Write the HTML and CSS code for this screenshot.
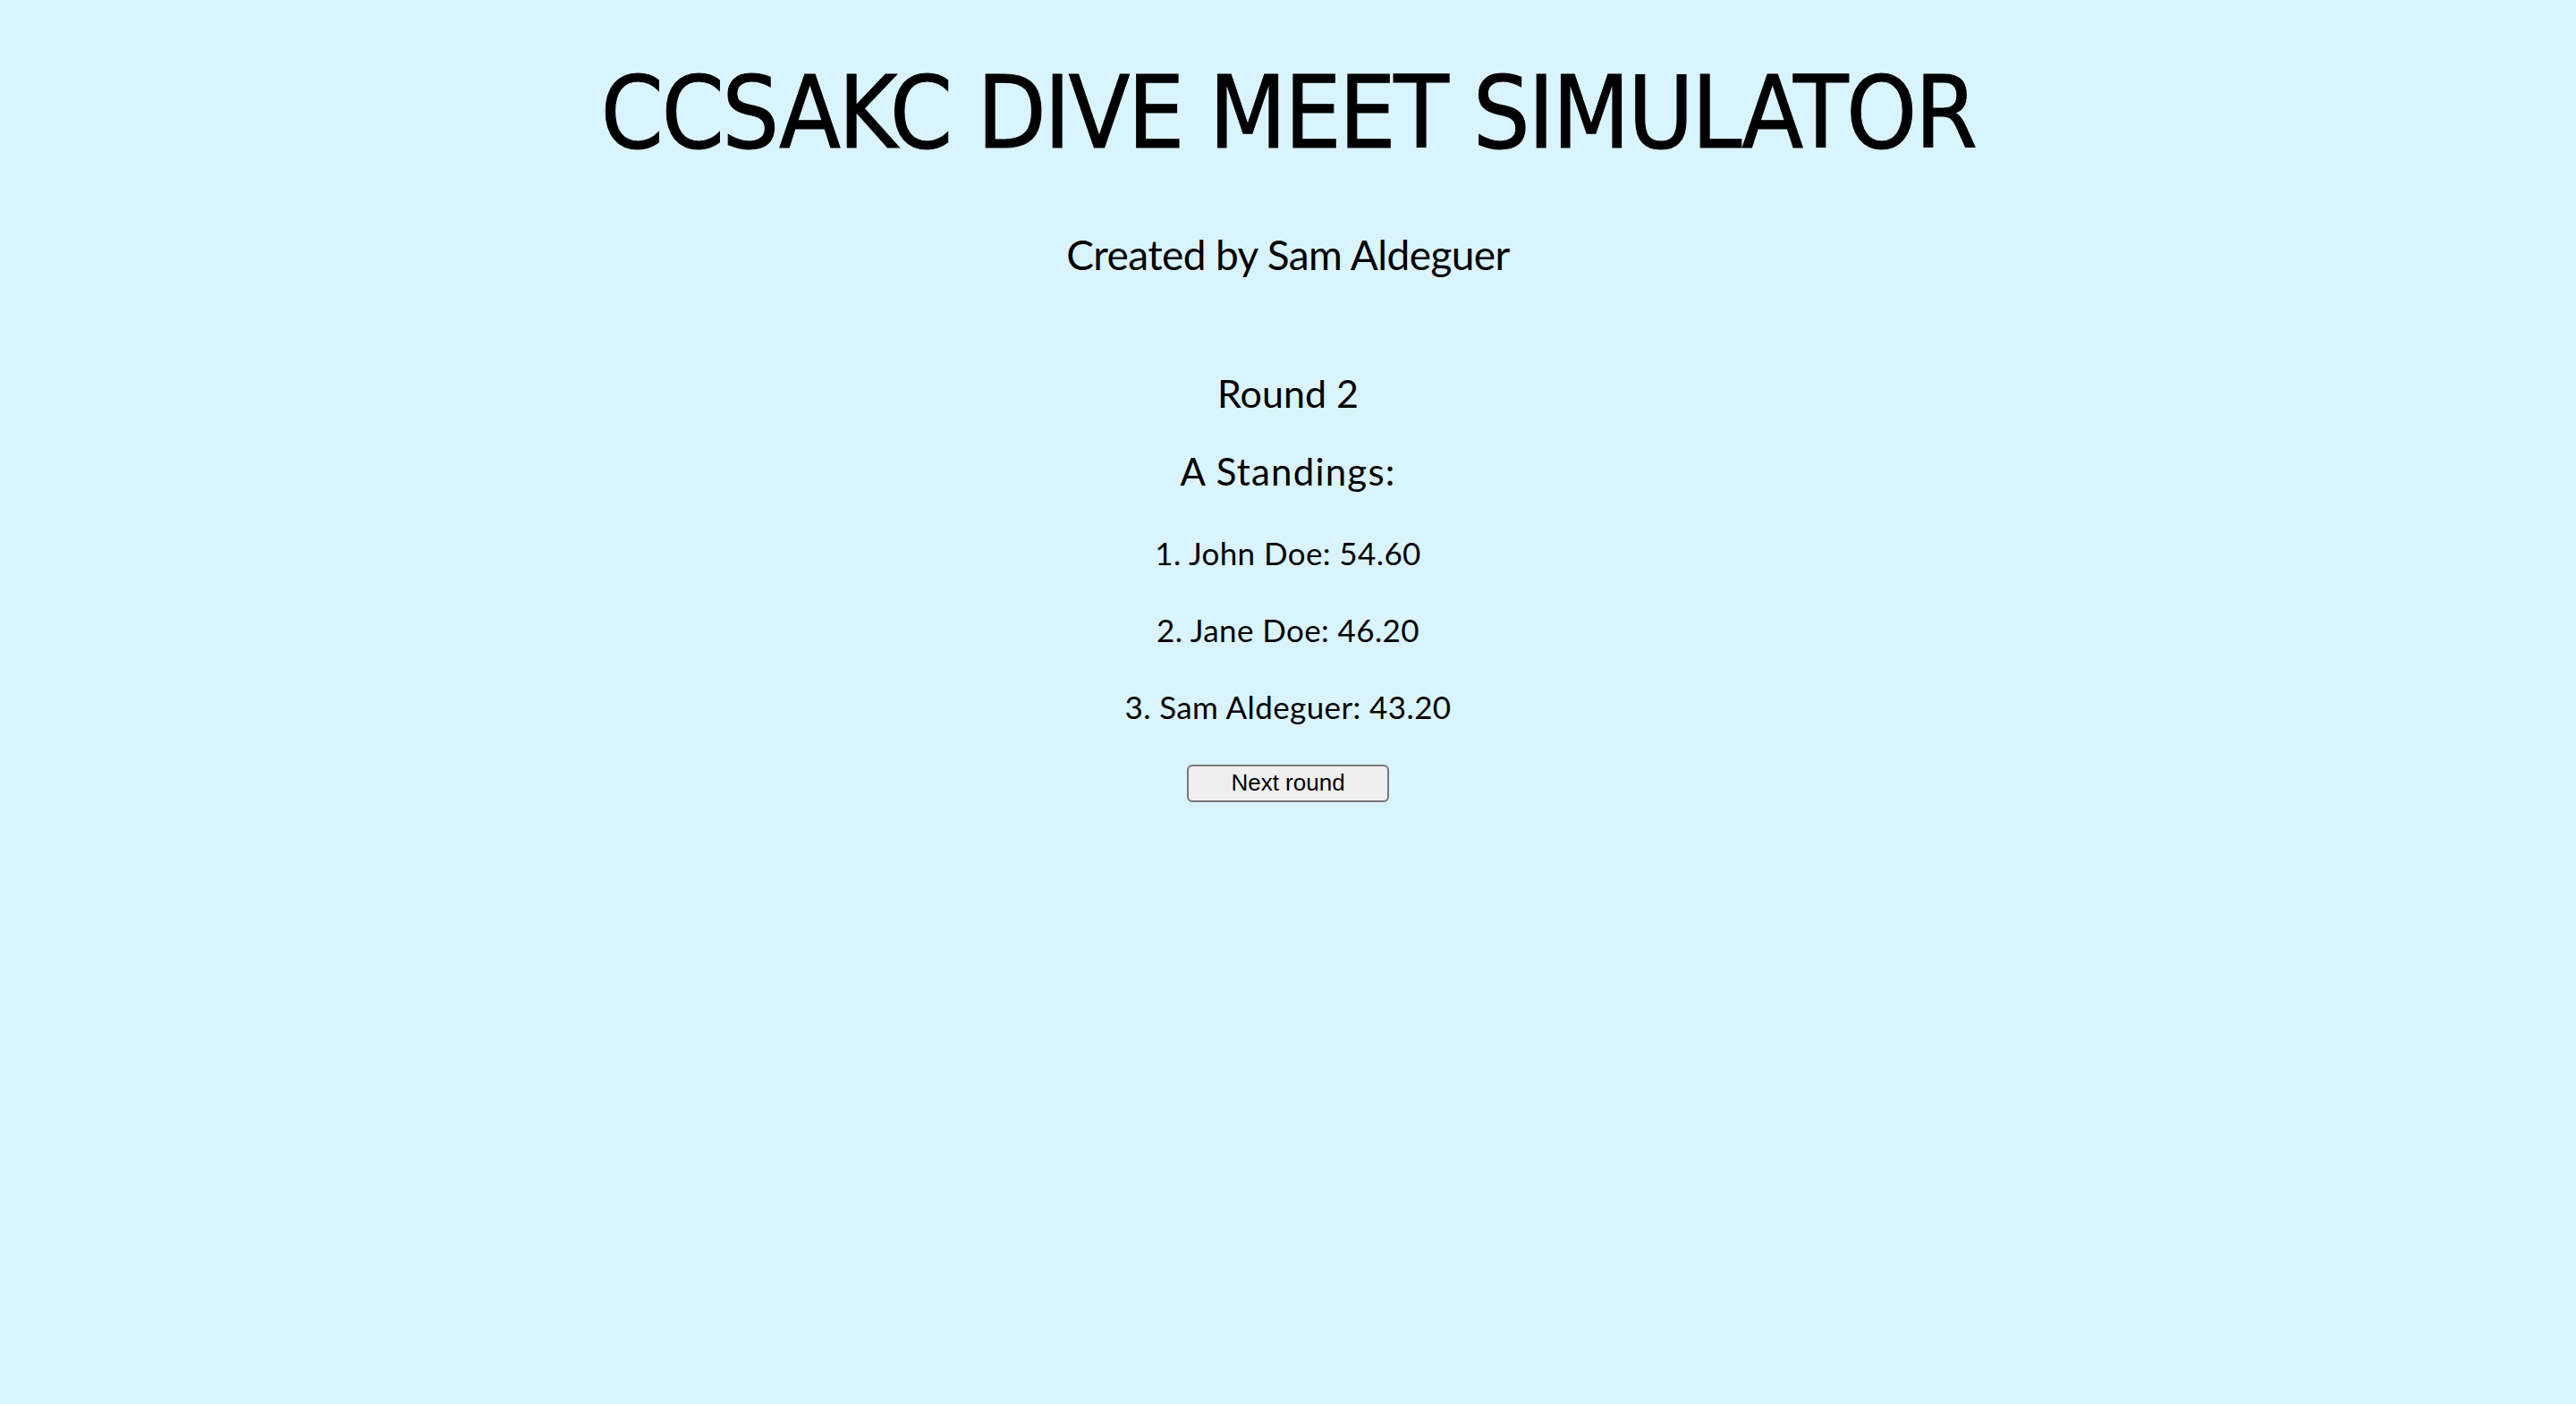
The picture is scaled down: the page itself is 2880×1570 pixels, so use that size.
FILE: index.html
```html
<!DOCTYPE html>
<html lang="en">
<head>
<meta charset="utf-8">
<title>CCSAKC Dive Meet Simulator</title>
<link rel="stylesheet" href="styles.css">
</head>
<body>
<main class="page">
  <h1 class="title">CCSAKC DIVE MEET SIMULATOR</h1>
  <p class="credit">Created by Sam Aldeguer</p>
  <h2 class="round">Round 2</h2>
  <h3 class="standings-head">A Standings:</h3>
  <ol class="standings">
    <li class="entry">1. John Doe: 54.60</li>
    <li class="entry">2. Jane Doe: 46.20</li>
    <li class="entry">3. Sam Aldeguer: 43.20</li>
  </ol>
  <button class="next-btn" type="button">Next round</button>
</main>
</body>
</html>
```

FILE: styles.css
```css
html, body {
  margin: 0;
  padding: 0;
}
body {
  background: #daf4fe;
  color: #000;
  font-family: Lato, "Noto Sans", sans-serif;
  min-height: 1570px;
}
.page {
  display: flex;
  flex-direction: column;
  align-items: center;
  text-align: center;
}
.title {
  margin: 59px 0 0;
  font-family: "DejaVu Sans Condensed", "DejaVu Sans", sans-serif;
  font-stretch: condensed;
  font-size: 112px;
  font-weight: 400;
  line-height: 1.2;
  letter-spacing: -2.5px;
  -webkit-text-stroke: 1px #000;
}
.credit {
  margin: 64px 0 0;
  font-size: 46px;
  line-height: 1.2;
  letter-spacing: -0.6px;
}
.round {
  margin: 101px 0 0;
  font-size: 43px;
  font-weight: 400;
  line-height: 1.2;
}
.standings-head {
  margin: 37px 0 0;
  font-size: 42px;
  font-weight: 400;
  line-height: 1.2;
  letter-spacing: 1.2px;
}
.standings {
  list-style: none;
  margin: 44px 0 0;
  padding: 0;
  display: flex;
  flex-direction: column;
  align-items: center;
  gap: 44px;
}
.entry {
  font-size: 35px;
  line-height: 1.2;
  letter-spacing: 0.4px;
}
.next-btn {
  margin-top: 44px;
  width: 226px;
  height: 42px;
  font-family: "Liberation Sans", Arial, sans-serif;
  font-size: 26px;
  color: #000;
  background: #efefef;
  border: 2px solid #767676;
  border-radius: 6px;
  padding: 0;
}
```
